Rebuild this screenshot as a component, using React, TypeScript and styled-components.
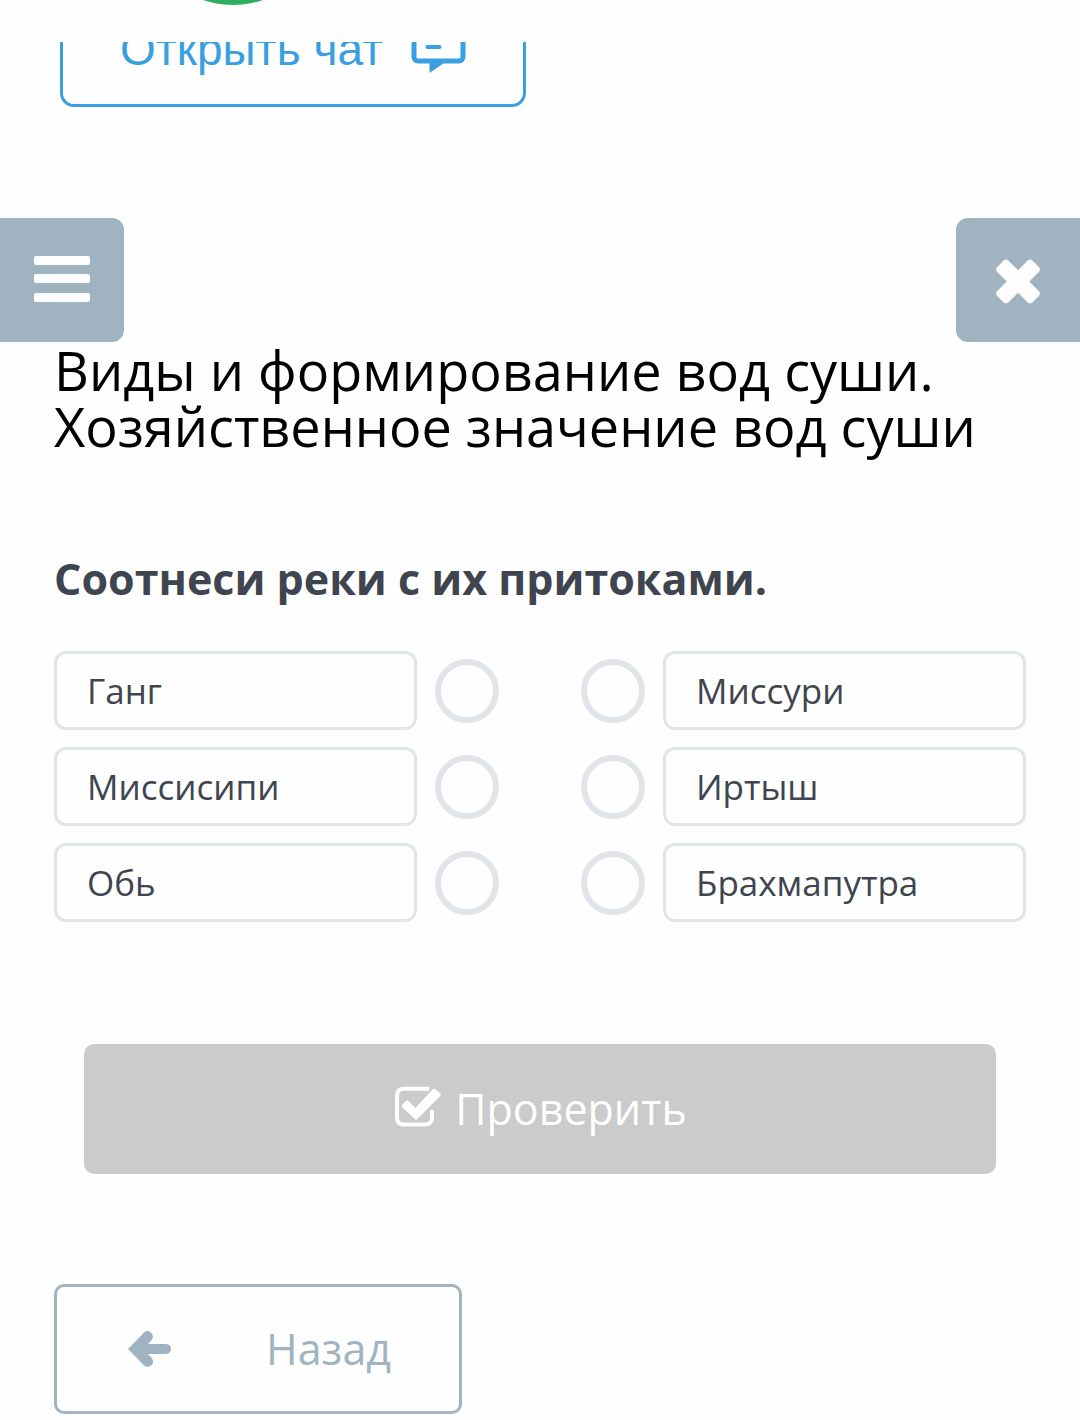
import React, { useState } from "react";
import styled, { createGlobalStyle } from "styled-components";

const GlobalStyle = createGlobalStyle`
  *, *::before, *::after { box-sizing: border-box; }
  body {
    margin: 0;
    background: #fefefe;
    font-family: "Open Sans", "Noto Sans", sans-serif;
    color: #3f454f;
  }
  h1, h2 { margin: 0; }
  button { font-family: inherit; cursor: pointer; }
  svg { display: block; flex: none; }
`;

const Page = styled.div`
  padding-bottom: 6px;
`;

const TopStrip = styled.header`
  height: 42px;
  overflow: hidden;
  display: flex;
  align-items: flex-start;
  padding-left: 141px;
`;

const GreenBadge = styled.span`
  width: 184px;
  height: 184px;
  margin-top: -179px;
  border-radius: 50%;
  background: #2fae60;
`;

const ChatWindow = styled.div`
  height: 65px;
  overflow: hidden;
  display: flex;
  align-items: flex-end;
  padding: 0 60px;
`;

const ChatButton = styled.button`
  flex: none;
  height: 116px;
  display: flex;
  align-items: center;
  gap: 28px;
  padding: 0 57px;
  border: 3px solid #3a9fdc;
  border-radius: 14px;
  background: transparent;
  color: #3a9fe0;
  && { font-family: "Liberation Sans", Arial, sans-serif; }
  font-size: 46px;
  line-height: 56px;
`;

const Toolbar = styled.nav`
  display: flex;
  justify-content: space-between;
  margin-top: 111px;
`;

const EdgeButton = styled.button<{ $side: "left" | "right" }>`
  width: 124px;
  height: 124px;
  display: flex;
  align-items: center;
  justify-content: center;
  padding: 0;
  border: 0;
  border-radius: ${(p) => (p.$side === "left" ? "0 12px 12px 0" : "12px 0 0 12px")};
  background: #9fb4c0;
  color: #fefefe;
`;

const Content = styled.main`
  padding: 0 54px;
`;

const Title = styled.h1`
  color: #000;
  font-size: 54px;
  font-weight: 400;
  line-height: 56px;
`;

const Task = styled.h2`
  margin-top: 97px;
  font-size: 43px;
  font-weight: 700;
  line-height: 56px;
`;

const Pairs = styled.div`
  display: flex;
  justify-content: space-between;
  gap: 82px;
  margin-top: 44px;
`;

const Column = styled.div`
  flex: 1;
  display: grid;
  gap: 17px;
`;

const Option = styled.div<{ $mirrored?: boolean }>`
  display: flex;
  flex-direction: ${(p) => (p.$mirrored ? "row-reverse" : "row")};
  align-items: center;
  gap: 18px;
`;

const OptionLabel = styled.label`
  flex: 1;
  height: 79px;
  display: flex;
  align-items: center;
  padding: 0 30px;
  border: 3px solid #e0e5e6;
  border-radius: 12px;
  font-size: 35px;
  line-height: 57px;
`;

const Dot = styled.input`
  appearance: none;
  flex: none;
  width: 64px;
  height: 64px;
  margin: 0;
  border: 6px solid #e1e5e9;
  border-radius: 50%;
  &:checked { border-color: #9fb4c0; }
`;

const ActionButton = styled.button`
  height: 130px;
  display: flex;
  align-items: center;
  border-radius: 10px;
  font-size: 43px;
  line-height: 56px;
`;

const CheckButton = styled(ActionButton)`
  width: calc(100% - 60px);
  justify-content: center;
  gap: 14px;
  margin: 122px 30px 0;
  padding: 0 4px 0 6px;
  border: 0;
  background: #cbcbcb;
  color: #fefefe;
`;

const BackButton = styled(ActionButton)`
  width: 408px;
  justify-content: space-between;
  margin-top: 110px;
  padding: 0 68px 0 71px;
  border: 3px solid #9fb4c0;
  background: transparent;
  color: #9fb4c0;
`;

const ChatIcon = () => (
  <svg width="55" height="48" viewBox="0 0 55 48" fill="none" stroke="currentColor" strokeWidth="5" aria-hidden="true">
    <rect x="3" y="0" width="49" height="36" rx="4" />
    <path d="M18.500 34V48L33 38V34Z" fill="currentColor" stroke="none" />
    <path d="M16.500 12h22M16.500 22h12" strokeWidth="4" strokeLinecap="round" />
  </svg>
);

const MenuIcon = () => (
  <svg width="56" height="48" viewBox="0 0 56 48" fill="currentColor" aria-hidden="true">
    <rect y="0" width="56" height="9" rx="2" />
    <rect y="18" width="56" height="9" rx="2" />
    <rect y="37" width="56" height="9" rx="2" />
  </svg>
);

const CloseIcon = () => (
  <svg width="44" height="48" viewBox="0 0 44 48" fill="currentColor" aria-hidden="true">
    <g transform="rotate(45 22 25.500)">
      <rect x="-3" y="17.500" width="50" height="16" rx="4" />
      <rect x="14" y=".5" width="16" height="50" rx="4" />
    </g>
  </svg>
);

const CheckIcon = () => (
  <svg width="46" height="46" viewBox="0 0 46 46" aria-hidden="true">
    <path d="M34 2.800H9Q2 2.800 2 9.800v22Q2 38.500 9 38.500h21Q37 38.500 37 31.500V24" fill="none" stroke="currentColor" strokeWidth="4" />
    <path d="M7.500 18.500 11 15q1.500-1 3 .5l6.500 6.500L37.500 3.500q1.500-1.500 3 0l4.300 3.600q1.700 1.500.2 3.100L22.300 33q-1.300 1.300-2.600 0L7.500 21.500q-1.500-1.500 0-3Z" fill="currentColor" />
  </svg>
);

const ArrowIcon = () => (
  <svg width="43" height="36" viewBox="0 0 43 36" fill="currentColor" aria-hidden="true">
    <path d="M0 18 16 1.600q3-3 6.500-.4 4.500 3.500 1 8L20 13h18q5 .5 5 5t-5 5H20l3.500 3.800q3.500 4.500-.5 7.700-3.500 2.700-7 0Z" />
  </svg>
);

const rivers = ["Ганг", "Миссисипи", "Обь"];
const tributaries = ["Миссури", "Иртыш", "Брахмапутра"];

type OptionListProps = { name: string; items: string[]; mirrored?: boolean };

function OptionList({ name, items, mirrored }: OptionListProps) {
  const [selected, setSelected] = useState<string | null>(null);
  return (
    <Column>
      {items.map((item, i) => (
        <Option key={item} $mirrored={mirrored}>
          <OptionLabel htmlFor={`${name}-${i}`}>{item}</OptionLabel>
          <Dot
            type="radio"
            id={`${name}-${i}`}
            name={name}
            checked={selected === item}
            onChange={() => setSelected(item)}
          />
        </Option>
      ))}
    </Column>
  );
}

export default function App() {
  return (
    <Page>
      <GlobalStyle />
      <TopStrip>
        <GreenBadge />
      </TopStrip>
      <ChatWindow>
        <ChatButton type="button">
          Открыть чат
          <ChatIcon />
        </ChatButton>
      </ChatWindow>
      <Toolbar>
        <EdgeButton type="button" $side="left" aria-label="Меню">
          <MenuIcon />
        </EdgeButton>
        <EdgeButton type="button" $side="right" aria-label="Закрыть">
          <CloseIcon />
        </EdgeButton>
      </Toolbar>
      <Content>
        <Title>
          Виды и формирование вод суши.
          <br />
          Хозяйственное значение вод суши
        </Title>
        <Task>Соотнеси реки с их притоками.</Task>
        <Pairs>
          <OptionList name="river" items={rivers} />
          <OptionList name="tributary" items={tributaries} mirrored />
        </Pairs>
        <CheckButton type="button">
          <CheckIcon />
          Проверить
        </CheckButton>
        <BackButton type="button">
          <ArrowIcon />
          Назад
        </BackButton>
      </Content>
    </Page>
  );
}
